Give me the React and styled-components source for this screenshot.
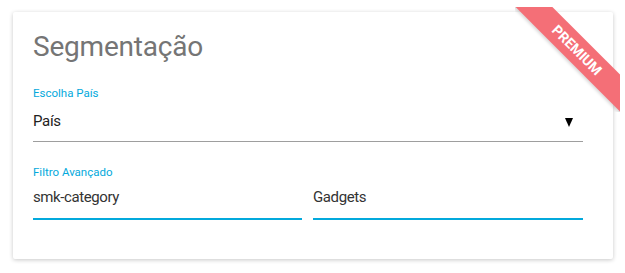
import React from "react"
import styled, { createGlobalStyle } from "styled-components"

const GlobalStyle = createGlobalStyle`
  html, body {
    margin: 0;
    padding: 0;
    background: #ffffff;
    font-family: Roboto, "Liberation Sans", Arial, sans-serif;
  }
`

export default function App() {
  return (
    <>
      <GlobalStyle />
      <Page>
        <Card>
          <Ribbon>
            <RibbonBand>PREMIUM</RibbonBand>
          </Ribbon>
          <Title>Segmentação</Title>

          <Label>Escolha País</Label>
          <Select>
            <span>País</span>
            <Arrow />
          </Select>

          <FilterLabel>Filtro Avançado</FilterLabel>
          <FilterRow>
            <Input>smk-category</Input>
            <Input>Gadgets</Input>
          </FilterRow>
        </Card>
      </Page>
    </>
  )
}

const Page = styled.div`
  padding: 12px 0 14px 13px;
`

const Card = styled.div`
  position: relative;
  width: 600px;
  height: 247px;
  box-sizing: border-box;
  padding: 17px 30px 0 20px;
  background: #fff;
  border-radius: 2px;
  box-shadow: 0 1px 4px rgba(0, 0, 0, 0.22);
`

const Ribbon = styled.div`
  position: absolute;
  top: -5px;
  right: -7px;
  width: 105px;
  height: 105px;
  overflow: hidden;
`

const RibbonBand = styled.div`
  position: absolute;
  left: 62px;
  top: 43px;
  width: 170px;
  height: 26px;
  line-height: 26px;
  transform: translate(-50%, -50%) rotate(45deg);
  background: #f46f77;
  color: #fff;
  font-size: 14px;
  font-weight: 700;
  text-align: center;
  box-shadow: 0 2px 3px rgba(0, 0, 0, 0.15);
`

const Title = styled.h1`
  margin: 0;
  font-size: 28px;
  line-height: 36px;
  font-weight: 400;
  letter-spacing: -0.2px;
  color: #757575;
`

const Label = styled.div`
  margin-top: 21px;
  font-size: 11.5px;
  line-height: 14px;
  color: #03a9dc;
`

const FilterLabel = styled(Label)`
  margin-top: 23px;
`

const Select = styled.div`
  display: flex;
  align-items: center;
  justify-content: space-between;
  margin-top: 11px;
  padding-bottom: 10px;
  border-bottom: 1px solid #9e9e9e;
  font-size: 15px;
  line-height: 20px;
  letter-spacing: -0.3px;
  color: #212121;
`

const Arrow = styled.span`
  width: 0;
  height: 0;
  margin: 2px 10px 0 0;
  border-left: 4px solid transparent;
  border-right: 4px solid transparent;
  border-top: 9px solid #000;
`

const FilterRow = styled.div`
  display: grid;
  grid-template-columns: 269px 270px;
  column-gap: 11px;
  margin-top: 8px;
`

const Input = styled.div`
  padding-bottom: 11px;
  border-bottom: 2px solid #03a9dc;
  font-size: 15px;
  line-height: 20px;
  letter-spacing: -0.4px;
  color: #333;
`
